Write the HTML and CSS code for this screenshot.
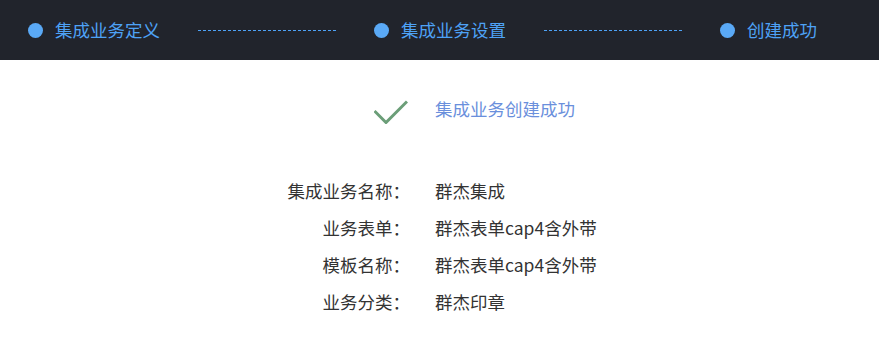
FILE: index.html
```html
<!DOCTYPE html>
<html lang="zh-CN">
<head>
<meta charset="utf-8">
<title>创建成功</title>
<link rel="stylesheet" href="styles.css">
</head>
<body>
<header class="steps">
  <div class="step"><span class="dot"></span><span class="step-text">集成业务定义</span></div>
  <span class="dash"></span>
  <div class="step"><span class="dot"></span><span class="step-text">集成业务设置</span></div>
  <span class="dash"></span>
  <div class="step"><span class="dot"></span><span class="step-text">创建成功</span></div>
</header>
<main class="result">
  <div class="title-icon">
    <svg width="34" height="24" viewBox="0 0 34 24"><polyline points="0.5,11 12,22.5 33,1.5" fill="none" stroke="#6b9e78" stroke-width="3"/></svg>
  </div>
  <div class="title">集成业务创建成功</div>

  <div class="label">集成业务名称：</div><div class="value">群杰集成</div>
  <div class="label">业务表单：</div><div class="value">群杰表单cap4含外带</div>
  <div class="label">模板名称：</div><div class="value">群杰表单cap4含外带</div>
  <div class="label">业务分类：</div><div class="value">群杰印章</div>
</main>
</body>
</html>
```
FILE: styles.css
```css
html, body {
  margin: 0;
  padding: 0;
  background: #ffffff;
}
body {
  font-family: "Noto Sans CJK SC", "Noto Sans", sans-serif;
  font-size: 17.5px;
  color: #333333;
}
.steps {
  height: 60px;
  background: #21242c;
  display: flex;
  align-items: center;
  padding-left: 28px;
  box-sizing: border-box;
}
.step {
  display: flex;
  align-items: center;
  color: #4ea2f6;
}
.dot {
  width: 15px;
  height: 15px;
  border-radius: 50%;
  background: #5aa9f6;
  margin-right: 12px;
  flex: none;
}
.step-text {
  line-height: 24px;
  white-space: nowrap;
}
.dash {
  width: 139px;
  height: 1px;
  margin: 1px 37px 0 38px;
  background: repeating-linear-gradient(to right, #4ea2f6 0 3px, transparent 3px 5px);
  flex: none;
}
.result {
  display: grid;
  grid-template-columns: 410px auto;
  column-gap: 25px;
  margin-top: 30px;
  line-height: 37px;
}
.title-icon {
  justify-self: end;
  align-self: start;
  margin-right: 2px;
  margin-top: 10px;
  height: 24px;
}
.title-icon svg {
  display: block;
}
.title {
  color: #6a8fdc;
  margin-bottom: 45px;
}
.label {
  text-align: right;
  white-space: nowrap;
}
.value {
  white-space: nowrap;
}
```
